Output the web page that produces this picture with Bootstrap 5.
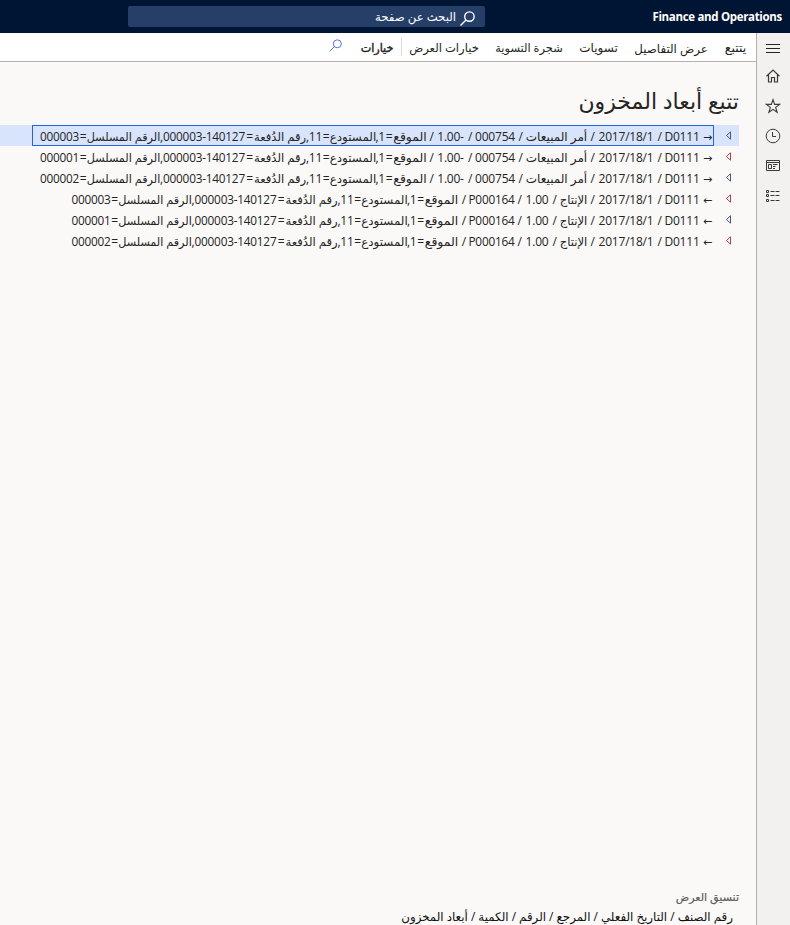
<!DOCTYPE html>
<html lang="ar" dir="rtl">
<head>
<meta charset="utf-8">
<title>Finance and Operations</title>
<link href="https://cdn.jsdelivr.net/npm/bootstrap@5.3.0/dist/css/bootstrap.min.css" rel="stylesheet">
<style>
body{width:790px;height:925px;overflow:hidden;background:#faf9f8;color:#252423;font:12px/21px "Open Sans","DejaVu Sans",sans-serif}
.topbar{height:33px;background:#001433;color:#fff}
.brandname{width:305px;padding-inline-start:8px;font-size:11.5px;font-weight:700;letter-spacing:-.32px;line-height:37px}
.seek{width:357px;height:21px;background:#263f68;border-radius:2px;padding-inline-start:10px}
.seek span{font-size:11.7px;margin-inline-start:4px;line-height:25px}
.side{width:34px;background:#f2f1f0;border-inline-end:1px solid #b3b0ad;padding-top:1px;padding-inline-start:1px}
.side svg{display:block;width:16px;height:16px;margin:7px 0}
.side svg:first-child{margin:6px 0 5px}
.tools{height:29px;border-bottom:1px solid #b3b0ad;padding-inline-start:9px;gap:16px;line-height:20px}
.tools .fit{position:relative;height:20px;margin-top:2px}
.fit{display:flex;flex:none;justify-content:center;white-space:nowrap}
.w23{width:23px;font-size:12.6px}.w74{width:74px;font-size:11.8px}.w39{width:39px}.w68{width:68px;font-size:11.4px}.w70{width:70px;font-size:11.6px}
.strong{width:32px;-webkit-text-stroke:.4px #252423;font-size:11.2px}
.rule{width:1px;height:18px;background:#dddbd9;margin-inline:-9px -8px}
.finder{margin-inline-start:3px;margin-bottom:3px}
h1{font:22px/40px "Open Sans","DejaVu Sans",sans-serif;padding-inline-start:17px;margin:18px 0 5px}
.line{height:21px;margin-inline-start:17px}
.twist{width:25px;height:21px;padding-inline-end:4px}
.entry{height:21px;border:1px solid transparent;padding-inline-end:7px;line-height:21px;color:#252423}
.picked{background:#d8e4fc}
.picked .entry{border-color:#2266dd}
.num{letter-spacing:-.22px}
.foot{padding-inline-start:17px;height:38px}
.foot small{font-size:11.1px;color:#605e5c;-webkit-text-stroke:.2px #605e5c;line-height:19px}
.foot p{font-size:11.85px;line-height:20px;padding-inline-start:6px;color:#111}
</style>
</head>
<body class="d-flex flex-column">
<header class="topbar d-flex align-items-center flex-shrink-0">
  <div class="brandname text-nowrap"><bdi>Finance and Operations</bdi></div>
  <div class="seek d-flex align-items-center">
    <svg class="mt-1" width="15" height="15" viewBox="0 0 14 14" fill="none" stroke="#fff" stroke-width="1.3"><circle cx="8.8" cy="5.2" r="4.4"/><path d="M5.6 8.4.5 13.5"/></svg>
    <span>البحث عن صفحة</span>
  </div>
</header>
<div class="d-flex flex-grow-1">
  <nav class="side d-flex flex-column align-items-center flex-shrink-0">
    <svg viewBox="0 0 16 16" stroke="#252423" stroke-width="1"><path d="M1 4.500h14M1 8.500h14M1 12.500h14"/></svg>
    <svg viewBox="0 0 16 16" fill="none" stroke="#3b3a39" stroke-width="1.200"><path d="M1.500 8.300 8 2l6.500 6.300M3.500 6.700v7.300h3V9.500h3V14h3V6.700"/></svg>
    <svg viewBox="0 0 16 16" fill="none" stroke="#3b3a39" stroke-width="1.100"><path d="m8 1.600 1.650 4.800h5l-4 3 1.500 4.900L8 11.400l-4.150 2.900 1.500-4.900-4-3h5z"/></svg>
    <svg viewBox="0 0 16 16" fill="none" stroke="#3b3a39"><circle cx="8" cy="8" r="6.800"/><path d="M7.500 4v4.500H11"/></svg>
    <svg viewBox="0 0 16 16" fill="none" stroke="#3b3a39"><path d="M1.500 2.500h13v10h-13zM1.500 4.500h13M3.500 6.500h3v4h-3zM8 6.500h4.500M8 8.500h2.500M8 10.500h2"/></svg>
    <svg viewBox="0 0 16 16" fill="none" stroke="#3b3a39"><path d="M1.500 2.500h2v2h-2zM1.500 6.500h2v2h-2zM1.500 11.500h2v2h-2zM5.500 3.500h4M10.500 3.500h4M5.500 7.500h4M10.500 7.500h4M5.500 12.500h4M10.500 12.500h4"/></svg>
  </nav>
  <main class="d-flex flex-column flex-grow-1">
    <div class="tools d-flex align-items-center bg-white flex-shrink-0">
      <span class="fit w23">يتتبع</span>
      <span class="fit w74">عرض التفاصيل</span>
      <span class="fit w39">تسويات</span>
      <span class="fit w68">شجرة التسوية</span>
      <span class="fit w70">خيارات العرض</span>
      <span class="rule"></span>
      <span class="fit strong">خيارات</span>
      <svg class="finder" width="13" height="13" viewBox="0 0 13 13" fill="none" stroke="#5a6fd6"><circle cx="8.300" cy="4.800" r="4"/><path d="M5.300 7.700.5 12.500"/></svg>
    </div>
    <h1>تتبع أبعاد المخزون</h1>
    <div id="trace"></div>
    <footer class="foot mt-auto"><small class="d-block">تنسيق العرض</small><p class="m-0">رقم الصنف / التاريخ الفعلي / المرجع / الرقم / الكمية / أبعاد المخزون</p></footer>
  </main>
</div>
<script>
const seg = (text, width, size) =>
  `<span class="fit ${/[\u0600-\u06ff]/.test(text) ? '' : 'num'}" ${/[\u0600-\u06ff]/.test(text) ? '' : 'dir="ltr"'} style="width:${width}px;font-size:${size || 12}px">${text}</span>`;
const slash = seg('/', 11);
const tail = serial => [
  ['الموقع', 34, 12.4], ['=', 8], ['1', 7], [',', 2], ['المستودع', 46, 11.9], ['=', 8], ['11', 13], [',', 3],
  ['رقم الدُفعة', 52, 11.6], ['=', 9], ['000003-140127', 82, 11.8], [',', 3], ['الرقم المسلسل', 73, 11.2], ['=', 8], [serial, 39, 11.8]
].map(a => seg(...a)).join('');
const start = arrow => seg(arrow, 11, 11) + seg('', 3) + seg('D0111', 34) + slash + seg('2017/18/1', 56) + slash;
const sale = s => start('→') + seg('أمر المبيعات', 61) + slash + seg('000754', 40) + seg('/', 10) + seg('1.00-', 29) + seg('/', 9) + tail(s);
const make = s => start('←') + seg('الإنتاج', 27, 11.6) + slash + seg('1.00', 24) + slash + seg('P000164', 45, 11.8) + seg('/', 10.5) + tail(s);
const rows = [sale('000003'), sale('000001'), sale('000002'), make('000003'), make('000001'), make('000002')];
document.getElementById('trace').innerHTML = rows.map((r, i) =>
  `<div class="line d-flex ${i ? '' : 'picked'}"><span class="twist d-flex align-items-center justify-content-center"><svg width="7" height="9" viewBox="0 0 7 9" fill="none" stroke="${i % 2 ? '#a4474c' : '#4b5780'}" stroke-width="1"><path d="M5.500 .8v7.400L1.500 4.500z"/></svg></span><div class="entry d-flex">${r}</div></div>`).join('');
</script>
<script src="https://cdn.jsdelivr.net/npm/bootstrap@5.3.0/dist/js/bootstrap.bundle.min.js"></script>
</body>
</html>
